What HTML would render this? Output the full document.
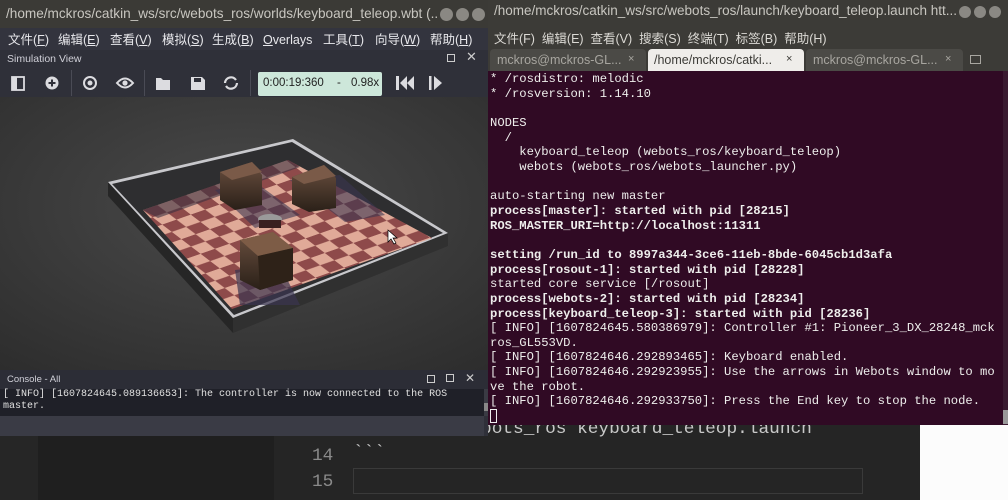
<!DOCTYPE html>
<html><head><meta charset="utf-8"><style>
*{margin:0;padding:0;box-sizing:border-box}
body{width:1008px;height:500px;overflow:hidden;background:#1e1e1e;position:relative;font-family:"Liberation Sans","Noto Sans CJK SC",sans-serif}
.abs{position:absolute}
.mono{font-family:"Liberation Mono","DejaVu Sans Mono",monospace}
.mi{position:absolute;top:32px;height:16px;line-height:16px;font-size:12.5px;color:#e8e8ec;white-space:nowrap}
</style></head><body>

<div class="abs" style="left:0;top:423px;width:38px;height:77px;background:#262626"></div>
<div class="abs" style="left:38px;top:423px;width:236px;height:77px;background:#1f1f1f"></div>
<div class="abs" style="left:274px;top:423px;width:646px;height:77px;background:#252525"></div>
<div class="abs" style="left:920px;top:423px;width:88px;height:77px;background:#fcfcfc"></div>
<div class="abs mono" style="left:312px;top:419px;font-size:17.8px;color:#8a8a8a">13</div>
<div class="abs mono" style="left:353px;top:419px;font-size:17.8px;color:#c8c8c8">roslaunch webots_ros keyboard_teleop.launch</div>
<div class="abs mono" style="left:312px;top:446px;font-size:17.8px;color:#8a8a8a">14</div>
<div class="abs mono" style="left:353px;top:443px;font-size:17.8px;color:#c8c8c8">&#96;&#96;&#96;</div>
<div class="abs mono" style="left:312px;top:472px;font-size:17.8px;color:#8a8a8a">15</div>
<div class="abs" style="left:353px;top:468px;width:510px;height:26px;border:1px solid #3a3a3a"></div>

<div class="abs" style="left:0;top:0;width:488px;height:436px;background:#2f3039;overflow:hidden">
  <div class="abs" style="left:0;top:0;width:488px;height:28px;background:#3b3a36"></div>
  <div class="abs" style="left:6px;top:6px;width:432px;overflow:hidden;font-size:13.6px;color:#c8c6c0;white-space:nowrap">/home/mckros/catkin_ws/src/webots_ros/worlds/keyboard_teleop.wbt (...</div>
  <div class="abs" style="left:440px;top:8px;width:13px;height:13px;border-radius:50%;background:#8a8883"></div>
  <div class="abs" style="left:456px;top:8px;width:13px;height:13px;border-radius:50%;background:#8a8883"></div>
  <div class="abs" style="left:472px;top:8px;width:13px;height:13px;border-radius:50%;background:#8a8883"></div>
  <div class="abs" style="left:0;top:28px;width:488px;height:22px;background:#33343e"></div>
  <span class="mi" style="left:8px">文件(<u>F</u>)</span>
  <span class="mi" style="left:58px">编辑(<u>E</u>)</span>
  <span class="mi" style="left:110px">查看(<u>V</u>)</span>
  <span class="mi" style="left:162px">模拟(<u>S</u>)</span>
  <span class="mi" style="left:212px">生成(<u>B</u>)</span>
  <span class="mi" style="left:263px"><u>O</u>verlays</span>
  <span class="mi" style="left:323px">工具(<u>T</u>)</span>
  <span class="mi" style="left:375px">向导(<u>W</u>)</span>
  <span class="mi" style="left:430px">帮助(<u>H</u>)</span>
  <div class="abs" style="left:7px;top:53px;font-size:10.5px;color:#d0d0d8">Simulation View</div>
  <div class="abs" style="left:447px;top:54px;width:8px;height:8px;border:1.3px solid #ccc"></div>
  <div class="abs" style="left:466px;top:49px;font-size:13px;color:#ccc">✕</div>
  <svg class="abs" style="left:0;top:68px" width="488" height="30">
    <g fill="#dcdce0" stroke="#dcdce0">
      <rect x="12" y="9" width="12" height="13" fill="none" stroke-width="1.8"/><rect x="12" y="9" width="5" height="13" stroke="none"/>
      <circle cx="52" cy="15" r="6.5" stroke="none"/><path d="M48.5 15h7M52 11.5v7" stroke="#2f3039" stroke-width="2"/>
      <line x1="71.5" y1="2" x2="71.5" y2="28" stroke="#4a4b55"/>
      <circle cx="90" cy="15" r="6" fill="none" stroke-width="2"/><circle cx="90" cy="15" r="2.5" stroke="none"/>
      <path d="M117 15q8-9 16 0q-8 9-16 0z" fill="none" stroke-width="2"/><circle cx="125" cy="15" r="2.6" stroke="none"/>
      <line x1="144.5" y1="2" x2="144.5" y2="28" stroke="#4a4b55"/>
      <path d="M156 10h5l2 2h7v10h-14z" stroke="none"/>
      <path d="M191 9h11l3 3v10h-14z" stroke="none"/><rect x="194" y="10" width="7" height="4" fill="#2f3039" stroke="none"/>
      <path d="M225 15a6 6 0 0 1 11-3M237 15a6 6 0 0 1-11 3" fill="none" stroke-width="2.2"/>
      <line x1="250.5" y1="2" x2="250.5" y2="28" stroke="#4a4b55"/>
      <path d="M396 8h3v14h-3zM407 8v14l-7-7zM414 8v14l-7-7z" stroke="none"/>
      <path d="M429 8h2.5v14h-2.5zM434 8l8 7-8 7z" stroke="none"/>
    </g>
  </svg>
  <div class="abs" style="left:258px;top:72px;width:124px;height:24px;background:#cde7da;border-radius:2px"></div>
  <div class="abs" style="left:263px;top:77px;font-size:11.5px;color:#222">0:00:19:360</div>
  <div class="abs" style="left:337px;top:77px;font-size:11.5px;color:#222">-</div>
  <div class="abs" style="left:351px;top:77px;font-size:11.5px;color:#222">0.98x</div>
  <svg class="abs" style="left:0;top:97px" width="488" height="273" viewBox="0 97 488 273">
    <defs>
      <radialGradient id="bg" cx="0.5" cy="0.4" r="0.8"><stop offset="0" stop-color="#4a4a4a"/><stop offset="1" stop-color="#2c2c2c"/></radialGradient>
      <pattern id="chk" width="2" height="2" patternUnits="userSpaceOnUse" patternTransform="matrix(14.3 -5 9.6 7.3 143 210)">
        <rect width="2" height="2" fill="#e0aa98"/><rect width="1" height="1" fill="#8e4a4a"/><rect x="1" y="1" width="1" height="1" fill="#8e4a4a"/>
      </pattern>
      <linearGradient id="box" x1="0" y1="0" x2="0" y2="1"><stop offset="0" stop-color="#6b5040"/><stop offset="1" stop-color="#2a2018"/></linearGradient>
    </defs>
    <rect x="0" y="97" width="488" height="273" fill="url(#bg)"/>
    <polygon points="108,182 108,196 233,333 233,318" fill="#262626"/>
    <polygon points="233,318 448,233 448,246 233,333" fill="#303030"/>
    <polygon points="108,182 293,139 448,233 233,318" fill="#c8c8cc"/>
    <polygon points="112,184 292,142 443,233 234,315" fill="#2e2e30"/>
    <polygon points="143,210 288,160 432,238 232,309" fill="url(#chk)"/>
    <polygon points="143,210 288,160 300,167 158,218" fill="#3a3040" opacity="0.6"/>
    <polygon points="215,190 255,182 300,215 255,228" fill="#3a3550" opacity="0.6"/>
    <polygon points="290,180 340,175 385,215 345,222" fill="#3a3550" opacity="0.6"/>
    <polygon points="235,270 280,265 300,305 240,305" fill="#3a3550" opacity="0.7"/>
    <polygon points="220,172 252,162 262,175 262,205 235,210 220,200" fill="url(#box)"/>
    <polygon points="220,172 252,162 262,172 232,180" fill="#7a5a48"/>
    <polygon points="292,177 324,165 336,178 336,208 309,212 292,204" fill="url(#box)"/>
    <polygon points="292,177 324,165 336,176 304,184" fill="#7a5a48"/>
    <ellipse cx="270" cy="219" rx="12" ry="5" fill="#9a9a9a"/>
    <rect x="259" y="220" width="22" height="8" fill="#3a2020"/>
    <polygon points="240,240 273,232 293,248 293,280 260,290 240,280" fill="url(#box)"/>
    <polygon points="240,240 273,232 293,248 258,256" fill="#7d5c46"/>
    <polygon points="258,256 293,248 293,280 260,290" fill="#2e2218"/>
    <path d="M388 230l0 12 3-3 3 5 2-1-3-5 4 0z" fill="#fff" stroke="#000" stroke-width="0.7"/>
  </svg>
  <div class="abs" style="left:0;top:370px;width:488px;height:19px;background:#2c2d36"></div>
  <div class="abs" style="left:7px;top:374px;font-size:9.5px;color:#d0d0d8">Console - All</div>
  <div class="abs" style="left:427px;top:375px;width:8px;height:8px;border:1.2px solid #ccc"></div>
  <div class="abs" style="left:446px;top:374px;width:8px;height:8px;border:1.2px solid #ccc"></div>
  <div class="abs" style="left:465px;top:371px;font-size:12px;color:#ccc">✕</div>
  <div class="abs" style="left:0;top:389px;width:484px;height:27px;background:#1f2028"></div>
  <div class="abs mono" style="left:3px;top:389px;font-size:10px;line-height:12px;color:#e0e0e0;white-space:pre">[ INFO] [1607824645.089136653]: The controller is now connected to the ROS
master.</div>
  <div class="abs" style="left:484px;top:389px;width:4px;height:27px;background:#3a3b44"></div>
  <div class="abs" style="left:484px;top:403px;width:4px;height:8px;background:#888"></div>
  <div class="abs" style="left:0;top:416px;width:484px;height:20px;background:#3a3b45"></div>
</div>

<div class="abs" style="left:488px;top:0;width:520px;height:425px;background:#300a24;overflow:hidden">
  <div class="abs" style="left:0;top:0;width:520px;height:25px;background:#3c3b37"></div>
  <div class="abs" style="left:6px;top:3px;font-size:13.5px;color:#c8c6c0;white-space:nowrap">/home/mckros/catkin_ws/src/webots_ros/launch/keyboard_teleop.launch htt...</div>
  <div class="abs" style="left:471px;top:6px;width:12px;height:12px;border-radius:50%;background:#8a8883"></div>
  <div class="abs" style="left:486px;top:6px;width:12px;height:12px;border-radius:50%;background:#8a8883"></div>
  <div class="abs" style="left:501px;top:6px;width:12px;height:12px;border-radius:50%;background:#8a8883"></div>
  <div class="abs" style="left:0;top:25px;width:520px;height:23px;background:#3c3b37"></div>
  <div class="abs" style="left:6px;top:28px;font-size:12.5px;color:#dcdad5;white-space:nowrap">文件(F)&nbsp;&nbsp;编辑(E)&nbsp;&nbsp;查看(V)&nbsp;&nbsp;搜索(S)&nbsp;&nbsp;终端(T)&nbsp;&nbsp;标签(B)&nbsp;&nbsp;帮助(H)</div>
  <div class="abs" style="left:0;top:48px;width:520px;height:23px;background:#3c3b37"></div>
  <div class="abs" style="left:2px;top:49px;width:156px;height:22px;background:#4b4a46;border-radius:4px 4px 0 0"></div>
  <div class="abs" style="left:9px;top:53px;font-size:12.5px;color:#a8a6a0">mckros@mckros-GL...</div>
  <div class="abs" style="left:140px;top:53px;font-size:11px;color:#a8a6a0">×</div>
  <div class="abs" style="left:160px;top:49px;width:156px;height:22px;background:#efedea;border-radius:4px 4px 0 0"></div>
  <div class="abs" style="left:166px;top:53px;font-size:12.5px;color:#3c3b37">/home/mckros/catki...</div>
  <div class="abs" style="left:298px;top:53px;font-size:11px;color:#3c3b37">×</div>
  <div class="abs" style="left:318px;top:49px;width:157px;height:22px;background:#4b4a46;border-radius:4px 4px 0 0"></div>
  <div class="abs" style="left:325px;top:53px;font-size:12.5px;color:#a8a6a0">mckros@mckros-GL...</div>
  <div class="abs" style="left:457px;top:53px;font-size:11px;color:#a8a6a0">×</div>
  <div class="abs" style="left:482px;top:55px;width:11px;height:9px;border:1.5px solid #a8a6a0"></div>
  <div class="abs" style="left:515px;top:71px;width:5px;height:354px;background:#3a1a30"></div>
  <div class="abs" style="left:515px;top:410px;width:5px;height:14px;background:#999"></div>
  <pre class="abs mono" style="left:2px;top:72px;font-size:12.2px;line-height:14.65px;color:#eeeeec">* /rosdistro: melodic
* /rosversion: 1.14.10

NODES
  /
    keyboard_teleop (webots_ros/keyboard_teleop)
    webots (webots_ros/webots_launcher.py)

auto-starting new master
<b>process[master]: started with pid [28215]
ROS_MASTER_URI=http://localhost:11311

setting /run_id to 8997a344-3ce6-11eb-8bde-6045cb1d3afa
process[rosout-1]: started with pid [28228]</b>
started core service [/rosout]
<b>process[webots-2]: started with pid [28234]
process[keyboard_teleop-3]: started with pid [28236]</b>
[ INFO] [1607824645.580386979]: Controller #1: Pioneer_3_DX_28248_mck
ros_GL553VD.
[ INFO] [1607824646.292893465]: Keyboard enabled.
[ INFO] [1607824646.292923955]: Use the arrows in Webots window to mo
ve the robot.
[ INFO] [1607824646.292933750]: Press the End key to stop the node.</pre>
  <div class="abs" style="left:2px;top:409px;width:7px;height:14px;border:1px solid #eee"></div>
</div>
</body></html>
